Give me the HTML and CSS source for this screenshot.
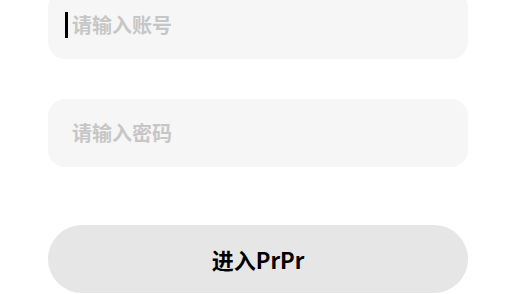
FILE: index.html
```html
<!DOCTYPE html>
<html lang="zh">
<head>
<meta charset="utf-8">
<link rel="stylesheet" href="styles.css">
</head>
<body>
<div class="form">
  <div class="field field-focused">
    <span class="caret"></span>
    <span class="placeholder">请输入账号</span>
  </div>
  <div class="field field-second">
    <span class="placeholder">请输入密码</span>
  </div>
  <div class="enter-btn">进入PrPr</div>
</div>
</body>
</html>
```

FILE: styles.css
```css
html, body {
  margin: 0;
  padding: 0;
  background: #ffffff;
  font-family: "Noto Sans CJK SC", "Noto Sans", sans-serif;
}

.form {
  width: 420px;
  margin-left: 48px;
  margin-top: -9px;
  display: flex;
  flex-direction: column;
}

.field {
  height: 68px;
  border-radius: 17px;
  background: #f6f6f6;
  display: flex;
  align-items: center;
  padding-left: 24px;
  box-sizing: border-box;
}

.field-focused {
  padding-left: 17px;
}

.field-second {
  margin-top: 40px;
}

.caret {
  width: 3px;
  height: 26px;
  background: #000000;
  margin-right: 4px;
}

.placeholder {
  font-size: 20px;
  font-weight: 700;
  color: #c6c6c6;
  line-height: 1;
}

.enter-btn {
  margin-top: 58px;
  height: 68px;
  border-radius: 34px;
  background: #e6e6e6;
  display: flex;
  align-items: center;
  justify-content: center;
  font-size: 22px;
  font-weight: 700;
  color: #000000;
}
```
